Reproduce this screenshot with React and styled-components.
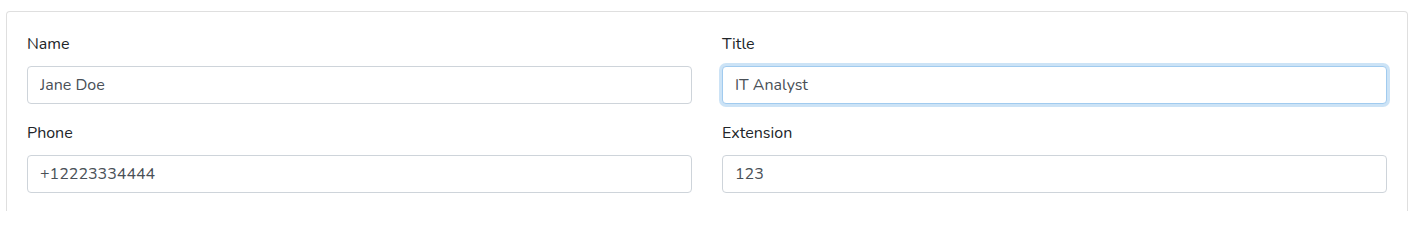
import React from "react";
import styled, { createGlobalStyle } from "styled-components";

const Global = createGlobalStyle`
  html, body { margin: 0; padding: 0; background: #fff; }
  body { font-family: "Nunito", "Lato", "Noto Sans", sans-serif; }
`;

const Page = styled.div`
  height: 211px;
  overflow: hidden;
  padding: 11px 6px 0 6px;
  box-sizing: border-box;
`;

const Card = styled.div`
  border: 1px solid rgba(0, 0, 0, 0.125);
  border-radius: 4px;
  background: #fff;
  padding: 20px 20px 0 20px;
  height: 220px;
  box-sizing: border-box;
`;

const Grid = styled.div`
  display: grid;
  grid-template-columns: 1fr 1fr;
  column-gap: 30px;
`;

const Group = styled.div`
  display: flex;
  flex-direction: column;
  margin-bottom: 17px;
`;

const Label = styled.label`
  font-size: 16px;
  line-height: 24px;
  color: #212529;
  margin-bottom: 10px;
`;

const Input = styled.input`
  box-sizing: border-box;
  height: 38px;
  width: 100%;
  padding: 0 12px;
  font-family: inherit;
  font-size: 16px;
  color: #495057;
  background: #fff;
  border: 1px solid ${(p) => (p.$focused ? "#a1cbef" : "#ced4da")};
  border-radius: 4px;
  outline: none;
  box-shadow: ${(p) => (p.$focused ? "0 0 0 3px rgba(52, 144, 220, 0.25)" : "none")};
`;

const fields = [
  { label: "Name", value: "Jane Doe" },
  { label: "Title", value: "IT Analyst", focused: true },
  { label: "Phone", value: "+12223334444" },
  { label: "Extension", value: "123" },
];

export default function App() {
  return (
    <>
      <Global />
      <Page>
        <Card>
          <Grid>
            {fields.map((f) => (
              <Group key={f.label}>
                <Label>{f.label}</Label>
                <Input defaultValue={f.value} $focused={f.focused} readOnly />
              </Group>
            ))}
          </Grid>
        </Card>
      </Page>
    </>
  );
}
